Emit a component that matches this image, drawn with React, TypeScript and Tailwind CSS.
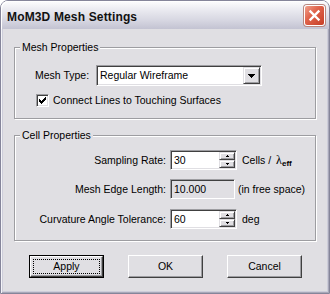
import React from "react";

function Sunken({ className, children }: { className: string; children?: React.ReactNode }) {
  return (
    <div
      className={
        "flex items-center border border-t-[#9d9da1] border-l-[#9d9da1] border-b-white border-r-white shadow-[inset_1px_1px_0_#404040,inset_-1px_-1px_0_#e0dfe3] " +
        className
      }
    >
      {children}
    </div>
  );
}

function SmallRaised({ className, children }: { className: string; children?: React.ReactNode }) {
  return (
    <div
      className={
        "flex items-center justify-center bg-[#e0dfe3] border border-t-[#e0dfe3] border-l-[#e0dfe3] border-b-[#404040] border-r-[#404040] shadow-[inset_1px_1px_0_#ffffff,inset_-1px_-1px_0_#9d9da1] " +
        className
      }
    >
      {children}
    </div>
  );
}

function Spin({ value }: { value: string }) {
  return (
    <Sunken className="ml-[4px] w-[67px] h-[20px] bg-white pl-[3px] pr-[1px]">
      <span className="flex-1">{value}</span>
      <div className="flex flex-col w-[16px] h-[16px]">
        <SmallRaised className="w-[16px] h-[8px]">
          <svg width="3" height="2" viewBox="0 0 3 2" shapeRendering="crispEdges">
            <rect x="1" y="0" width="1" height="1" fill="#000" />
            <rect x="0" y="1" width="3" height="1" fill="#000" />
          </svg>
        </SmallRaised>
        <SmallRaised className="w-[16px] h-[8px]">
          <svg width="3" height="2" viewBox="0 0 3 2" shapeRendering="crispEdges">
            <rect x="0" y="0" width="3" height="1" fill="#000" />
            <rect x="1" y="1" width="1" height="1" fill="#000" />
          </svg>
        </SmallRaised>
      </div>
    </Sunken>
  );
}

function Group({ title, className, children }: { title: string; className: string; children?: React.ReactNode }) {
  return (
    <fieldset
      className={
        "min-w-0 border border-[#9d9da1] shadow-[inset_1px_1px_0_#ffffff,1px_1px_0_#ffffff] " + className
      }
    >
      <legend className="ml-[5px] px-[2px] leading-[13px] bg-[#e0dfe3]">{title}</legend>
      {children}
    </fieldset>
  );
}

function Button({ label }: { label: string }) {
  return (
    <div className="w-[75px] h-[23px] flex items-center justify-center bg-[#e0dfe3] border border-t-white border-l-white border-b-[#404040] border-r-[#404040] shadow-[inset_-1px_-1px_0_#9d9da1]">
      {label}
    </div>
  );
}

function DefaultButton({ label }: { label: string }) {
  return (
    <div className="w-[75px] h-[23px] flex border border-black">
      <div className="flex-1 flex bg-[#e0dfe3] border border-t-white border-l-white border-b-[#404040] border-r-[#404040] shadow-[inset_-1px_-1px_0_#9d9da1]">
        <div className="flex-1 m-[2px] border border-dotted border-black flex items-center justify-center">
          {label}
        </div>
      </div>
    </div>
  );
}

export default function App() {
  return (
    <div className="w-[330px] h-[294px] bg-white font-['Liberation_Sans',Arial,sans-serif] text-[10.5px] leading-[13px] text-black">
      <div className="w-[330px] h-[294px] flex flex-col rounded-t-[8px] border border-[#85859a] bg-[#cdcdda] shadow-[inset_1px_0_0_#f4f4f8,inset_-1px_0_0_#a8a8b8,inset_0_-1px_0_#a8a8b8]">
        {/* title bar */}
        <div className="h-[28px] flex items-start rounded-t-[7px] bg-[linear-gradient(to_bottom,#fdfdfe_0%,#ebebf1_30%,#d6d6e1_70%,#c3c3d2_100%)] shadow-[inset_1px_1px_0_#ffffff]">
          <span className="mt-[9px] ml-[6px] font-['Liberation_Sans',Arial,sans-serif] font-bold text-[12px] leading-[14px] tracking-[0.15px] text-[#111]">
            MoM3D Mesh Settings
          </span>
          <div className="ml-auto mr-[4px] mt-[4px] w-[21px] h-[21px] rounded-[3px] border border-white bg-[linear-gradient(135deg,#f0a08c_0%,#e0644c_40%,#c63e26_100%)] shadow-[0_0_0_1px_#b8877f] flex items-center justify-center">
            <svg width="19" height="19" viewBox="0 0 19 19">
              <path d="M5.5 5.5 L13.5 13.5 M13.5 5.5 L5.5 13.5" stroke="#ffffff" strokeWidth="2.4" strokeLinecap="square" />
            </svg>
          </div>
        </div>

        {/* client area */}
        <div className="mx-[2px] mb-[2px] flex-1 flex flex-col bg-[#e0dfe3] px-[11px] pt-[12px]">
          <Group title="Mesh Properties" className="pb-[11px]">
            <div className="flex items-center pl-[20px] mt-[11px]">
              <span className="w-[61px]">Mesh Type:</span>
              <Sunken className="w-[166px] h-[21px] bg-white pl-[3px] pr-[1px]">
                <span className="flex-1">Regular Wireframe</span>
                <SmallRaised className="w-[17px] h-[17px]">
                  <svg width="7" height="4" viewBox="0 0 7 4" shapeRendering="crispEdges">
                    <rect x="0" y="0" width="7" height="1" fill="#000" />
                    <rect x="1" y="1" width="5" height="1" fill="#000" />
                    <rect x="2" y="2" width="3" height="1" fill="#000" />
                    <rect x="3" y="3" width="1" height="1" fill="#000" />
                  </svg>
                </SmallRaised>
              </Sunken>
            </div>
            <div className="flex items-center pl-[21px] mt-[8px]">
              <Sunken className="w-[13px] h-[13px] bg-white justify-center">
                <svg width="7" height="7" viewBox="0 0 7 7" shapeRendering="crispEdges">
                  <rect x="0" y="2" width="1" height="3" fill="#000" />
                  <rect x="1" y="3" width="1" height="3" fill="#000" />
                  <rect x="2" y="4" width="1" height="3" fill="#000" />
                  <rect x="3" y="3" width="1" height="3" fill="#000" />
                  <rect x="4" y="2" width="1" height="3" fill="#000" />
                  <rect x="5" y="1" width="1" height="3" fill="#000" />
                  <rect x="6" y="0" width="1" height="3" fill="#000" />
                </svg>
              </Sunken>
              <span className="ml-[4px]">Connect Lines to Touching Surfaces</span>
            </div>
          </Group>

          <Group title="Cell Properties" className="mt-[10px] pb-[11px]">
            <div className="flex items-center h-[20px] mt-[8px]">
              <span className="w-[151px] text-right">Sampling Rate:</span>
              <Spin value="30" />
              <span className="ml-[5px]">
                Cells /{" "}
                <span className="ml-[2px] font-['Liberation_Serif',serif] text-[12px]">λ</span>
                <sub className="text-[8px] font-bold">eff</sub>
              </span>
            </div>
            <div className="flex items-center h-[20px] mt-[9px]">
              <span className="w-[151px] text-right">Mesh Edge Length:</span>
              <Sunken className="ml-[4px] w-[65px] h-[20px] bg-[#e0dfe3] pl-[3px]">
                <span>10.000</span>
              </Sunken>
              <span className="ml-[3px]">(in free space)</span>
            </div>
            <div className="flex items-center h-[20px] mt-[10px]">
              <span className="w-[151px] text-right">Curvature Angle Tolerance:</span>
              <Spin value="60" />
              <span className="ml-[5px]">deg</span>
            </div>
          </Group>

          <div className="flex mt-[14px] pl-[15px] gap-[24px]">
            <DefaultButton label="Apply" />
            <Button label="OK" />
            <Button label="Cancel" />
          </div>
        </div>
      </div>
    </div>
  );
}
